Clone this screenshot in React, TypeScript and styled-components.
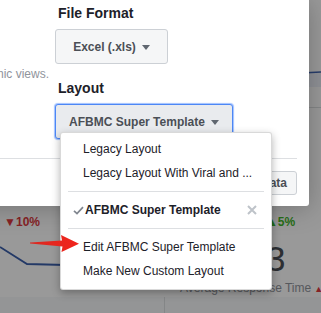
import React from "react";
import styled, { createGlobalStyle } from "styled-components";

const GlobalStyle = createGlobalStyle`
	* { box-sizing: border-box; }
	body {
		margin: 0;
		font-family: "Liberation Sans", Arial, sans-serif;
		background: #e9ebee;
	}
`;

const Page = styled.div`
	position: relative;
	width: 321px;
	height: 313px;
	overflow: hidden;
	background: #e9ebee;
`;

/* dashboard behind the dialog */

const Dashboard = styled.div`
	display: flex;
	flex-direction: column;
`;

const TopCard = styled.div`
	height: 205px;
	background: #fff;
	display: flex;
	justify-content: flex-end;
	padding-top: 60px;
`;

const MetricsRow = styled.div`
	height: 92px;
	display: grid;
	grid-template-columns: 164px 1fr;
	background: #fff;
`;

const MetricCell = styled.div`
	display: flex;
	flex-direction: column;
	padding-top: 10px;
`;

const MetricHead = styled.div<{ $pad: number }>`
	display: flex;
	justify-content: flex-end;
	gap: 4px;
	padding-right: ${(p) => p.$pad}px;
	font-size: 12px;
	line-height: 14px;
	color: #90949c;
	white-space: nowrap;
`;

const Delta = styled.span<{ $up?: boolean }>`
	font-weight: bold;
	color: ${(p) => (p.$up ? "#42b72a" : "#e0393e")};
`;

const Chart = styled.svg`
	margin-top: 4px;
`;

const BigValue = styled.div`
	font-size: 35px;
	line-height: 36px;
	color: #4b4f56;
	padding-left: 102px;
	margin-top: 12px;
`;

const Caption = styled.div`
	font-size: 12px;
	line-height: 14px;
	color: #90949c;
	padding-left: 16px;
	white-space: nowrap;
	margin-top: 4px;

	& > b {
		color: #e0393e;
		font-size: 9px;
		margin-left: 3px;
	}
`;

const BottomRow = styled.div`
	display: grid;
	grid-template-columns: 164px 1fr;
	gap: 1px;
	background: #dddfe2;
	height: 40px;

	& > div {
		background: #f7f8fa;
	}
`;

/* dialog layer */

const Overlay = styled.div`
	position: absolute;
	inset: 0;
	background: rgba(0, 0, 0, 0.4);
`;

const Dialog = styled.div`
	position: absolute;
	top: 0;
	left: -140px;
	width: 449px;
	background: #fff;
	border-radius: 0 0 3px 3px;
	box-shadow: 0 2px 26px rgba(0, 0, 0, 0.25);
`;

const DialogBody = styled.div`
	display: grid;
	grid-template-columns: 177px 1fr;
	column-gap: 6px;
	padding: 4px 12px 19px;
`;

const Description = styled.div`
	margin-top: 62px;
	display: flex;
	justify-content: flex-end;
	font-size: 12px;
	line-height: 16px;
	color: #90949c;
	white-space: nowrap;
`;

const Fields = styled.div`
	display: flex;
	flex-direction: column;
	align-items: flex-start;
`;

const FieldLabel = styled.div<{ $gap?: number }>`
	margin: ${(p) => p.$gap ?? 0}px 0 7px 3px;
	font-size: 14px;
	line-height: 18px;
	font-weight: bold;
	color: #1d2129;
`;

const SelectWrap = styled.div`
	position: relative;
`;

const SelectButton = styled.div<{ $width: number; $active?: boolean }>`
	width: ${(p) => p.$width}px;
	height: 35px;
	display: flex;
	align-items: center;
	justify-content: center;
	gap: 6px;
	border: 1px solid ${(p) => (p.$active ? "#4d87f5" : "#ccd0d5")};
	box-shadow: ${(p) => (p.$active ? "0 0 1px 1px #9fc0ff" : "none")};
	border-radius: 3px;
	background: ${(p) => (p.$active ? "#e9ebee" : "#f5f6f7")};
	font-size: 12px;
	font-weight: bold;
	color: #4b4f56;
`;

const Caret = styled.span`
	width: 0;
	height: 0;
	border-left: 4.5px solid transparent;
	border-right: 4.5px solid transparent;
	border-top: 5px solid #606770;
	margin-top: 1px;
`;

const Menu = styled.div`
	position: absolute;
	top: 28px;
	left: 5px;
	width: 212px;
	padding: 4px 0 6px;
	background: #fff;
	border: 1px solid rgba(0, 0, 0, 0.15);
	border-radius: 3px;
	box-shadow: 0 3px 8px rgba(0, 0, 0, 0.3);
	z-index: 2;
`;

const MenuItem = styled.div<{ $checked?: boolean }>`
	position: relative;
	height: 24px;
	display: flex;
	align-items: center;
	padding: 0 14px 0 ${(p) => (p.$checked ? 24 : 22)}px;
	font-size: 12px;
	font-weight: ${(p) => (p.$checked ? "bold" : "normal")};
	color: #1d2129;
	white-space: nowrap;
`;

const CheckMark = styled.svg`
	position: absolute;
	left: 12px;
	top: 8px;
`;

const RemoveIcon = styled.svg`
	margin-left: auto;
`;

const Separator = styled.div`
	height: 1px;
	margin: 6px 7px;
	background: #dddfe2;
`;

const DialogFooter = styled.div`
	margin: 0 12px;
	padding: 12px 0 11px;
	border-top: 1px solid #dddfe2;
	display: flex;
	justify-content: flex-end;
`;

const FooterButton = styled.div`
	height: 24px;
	display: flex;
	align-items: center;
	padding: 0 9px;
	border: 1px solid #ccd0d5;
	border-radius: 3px;
	background: #f5f6f7;
	font-size: 12px;
	font-weight: bold;
	color: #4b4f56;
`;

const Annotation = styled.svg`
	position: absolute;
	left: 28px;
	top: 233px;
	z-index: 3;
`;

const App = () => (
	<>
		<GlobalStyle />
		<Page>
			<Dashboard>
				<TopCard>
					<svg width="60" height="50" viewBox="0 0 60 50">
						<rect x="0" y="13" width="60" height="14" fill="#eef2fa" />
						<path d="M0 14 L30 13.5 L60 12" stroke="#4267b2" strokeWidth="1.5" fill="none" />
						<line x1="0" y1="47.5" x2="60" y2="47.5" stroke="#dddfe2" />
					</svg>
				</TopCard>
				<MetricsRow>
					<MetricCell>
						<MetricHead $pad={124}>
							Organic Reach <Delta>▼10%</Delta>
						</MetricHead>
						<Chart width="164" height="60" viewBox="0 0 164 60">
							<path d="M0 14 L27 31 L143 34" stroke="#3b5fab" strokeWidth="1.8" fill="none" />
						</Chart>
					</MetricCell>
					<MetricCell>
						<MetricHead $pad={28}>
							Response Rate <Delta $up>▲5%</Delta>
						</MetricHead>
						<BigValue>3</BigValue>
						<Caption>
							Average Response Time<b>▲</b>
						</Caption>
					</MetricCell>
				</MetricsRow>
				<BottomRow>
					<div />
					<div />
				</BottomRow>
			</Dashboard>

			<Overlay>
				<Dialog>
					<DialogBody>
						<Description>
							<span>Exported files won't include dynamic views.</span>
						</Description>
						<Fields>
							<FieldLabel>File Format</FieldLabel>
							<SelectButton $width={113}>
								Excel (.xls) <Caret />
							</SelectButton>
							<FieldLabel $gap={15}>Layout</FieldLabel>
							<SelectWrap>
								<SelectButton $width={178} $active>
									AFBMC Super Template <Caret />
								</SelectButton>
								<Menu>
									<MenuItem>Legacy Layout</MenuItem>
									<MenuItem>Legacy Layout With Viral and ...</MenuItem>
									<Separator />
									<MenuItem $checked>
										<CheckMark width="11" height="9" viewBox="0 0 11 9">
											<path d="M1 4.8 L4 7.6 L10 1.2" stroke="#7f858e" strokeWidth="1.7" fill="none" />
										</CheckMark>
										AFBMC Super Template
										<RemoveIcon width="10" height="10" viewBox="0 0 10 10">
											<path d="M1 1 L9 9 M9 1 L1 9" stroke="#bec3c9" strokeWidth="2" />
										</RemoveIcon>
									</MenuItem>
									<Separator />
									<MenuItem>Edit AFBMC Super Template</MenuItem>
									<MenuItem>Make New Custom Layout</MenuItem>
								</Menu>
							</SelectWrap>
						</Fields>
					</DialogBody>
					<DialogFooter>
						<FooterButton>Export Data</FooterButton>
					</DialogFooter>
				</Dialog>
			</Overlay>

			<Annotation width="54" height="22" viewBox="0 0 54 22">
				<defs>
					<linearGradient id="arrowFill" x1="0" x2="1" y1="0" y2="0">
						<stop offset="0" stopColor="#d92a22" />
						<stop offset="1" stopColor="#f2231b" />
					</linearGradient>
				</defs>
				<path
					d="M2 9.6 L34 7.5 L33 2 L51 10.8 L33.5 19 L34.5 13.5 L2 10.6 Z"
					fill="url(#arrowFill)"
				/>
			</Annotation>
		</Page>
	</>
);

export default App;
